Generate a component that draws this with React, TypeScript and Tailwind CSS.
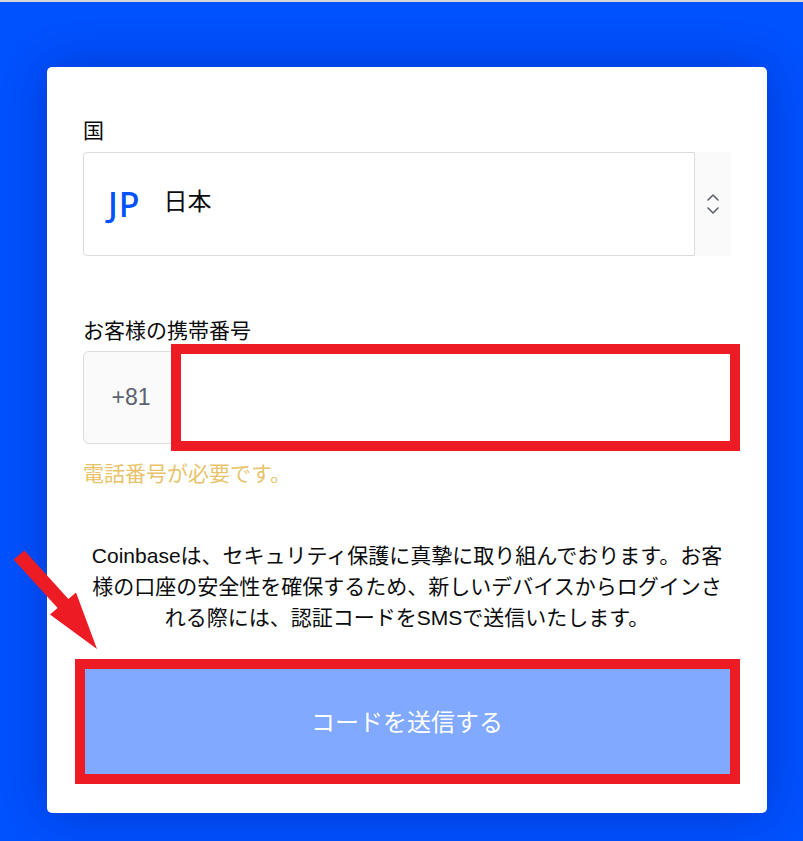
import React from 'react'

// Annotation arrow drawn over the page (screenshot markup)
function RedArrow() {
  return (
    <svg
      className="absolute inset-0 pointer-events-none"
      width="803"
      height="841"
      viewBox="0 0 803 841"
    >
      <polygon
        points="24.4,548.5 68.4,597 76,590.6 97,647 50,612.4 57.6,606 13.6,557.5"
        fill="#ed1c24"
      />
    </svg>
  )
}

function SelectArrows() {
  return (
    <svg width="14" height="24" viewBox="0 0 14 24" fill="none">
      <path d="M2 8 L7 3 L12 8" stroke="#5b616e" strokeWidth="1.6" strokeLinecap="round" strokeLinejoin="round" />
      <path d="M2 16 L7 21 L12 16" stroke="#5b616e" strokeWidth="1.6" strokeLinecap="round" strokeLinejoin="round" />
    </svg>
  )
}

export default function App() {
  return (
    <main className="relative w-full min-h-screen h-[841px] overflow-hidden bg-[#0052ff] border-t-2 border-[#d6d6d6] font-[Noto_Sans,Noto_Sans_CJK_JP,sans-serif]">
      <div className="pt-[65px] pl-[47px]">
        {/* Card */}
        <div className="w-[720px] bg-white rounded-[5px] px-[36px] pt-[49px] pb-[37px] shadow-[0_0_50px_rgba(0,25,140,0.45)]">
          {/* Country */}
          <div className="text-[21px] leading-[28px] text-[#0a0b0d]">国</div>
          <div className="mt-[8px] flex h-[104px]">
            <div className="flex-1 flex items-center border border-[#dcdcdc] rounded-l-[4px] pl-[24px]">
              <span className="text-[34px] font-medium text-[#0052ff] tracking-[1px] leading-none font-[Noto_Sans,sans-serif]">
                JP
              </span>
              <span className="ml-[23px] text-[24px] text-[#0a0b0d] leading-none -mt-[6px]">日本</span>
            </div>
            <div className="w-[36px] bg-[#fafafa] rounded-r-[4px] flex items-center justify-center">
              <SelectArrows />
            </div>
          </div>

          {/* Phone */}
          <div className="mt-[60px] text-[21px] leading-[28px] text-[#0a0b0d]">お客様の携帯番号</div>
          <div className="relative mt-[7px] flex h-[93px]">
            <div className="w-[96px] flex items-center justify-center bg-[#fafafa] border border-[#dcdcdc] rounded-l-[6px] text-[23px] text-[#5b616e] font-[Liberation_Sans,sans-serif]">
              +81
            </div>
            <div className="flex-1 bg-white border border-l-0 border-[#dcdcdc] rounded-r-[6px]" />
            <div className="absolute left-[88px] -top-[7px] -bottom-[7px] -right-[9px] border-[10px] border-[#ed1c24]" />
          </div>
          <div className="mt-[15px] text-[21px] leading-[28px] text-[#e8c36a]">電話番号が必要です。</div>

          {/* Notice */}
          <p className="mt-[53px] text-center text-[21px] leading-[31px] text-[#0a0b0d]">
            <span className="font-[Liberation_Sans,sans-serif]">Coinbase</span>
            は、セキュリティ保護に真摯に取り組んでおります。お客
            <br />
            様の口座の安全性を確保するため、新しいデバイスからログインさ
            <br />
            れる際には、認証コードを<span className="font-[Liberation_Sans,sans-serif]">SMS</span>で送信いたします。
          </p>

          {/* Submit */}
          <div className="relative mt-[34px]">
            <button className="w-full h-[109px] bg-[#80a9ff] text-white text-[24px]">
              コードを送信する
            </button>
            <div className="absolute -left-[8px] -top-[8px] -bottom-[8px] -right-[9px] border-[10px] border-[#ed1c24] pointer-events-none" />
          </div>
        </div>
      </div>
      <RedArrow />
    </main>
  )
}
